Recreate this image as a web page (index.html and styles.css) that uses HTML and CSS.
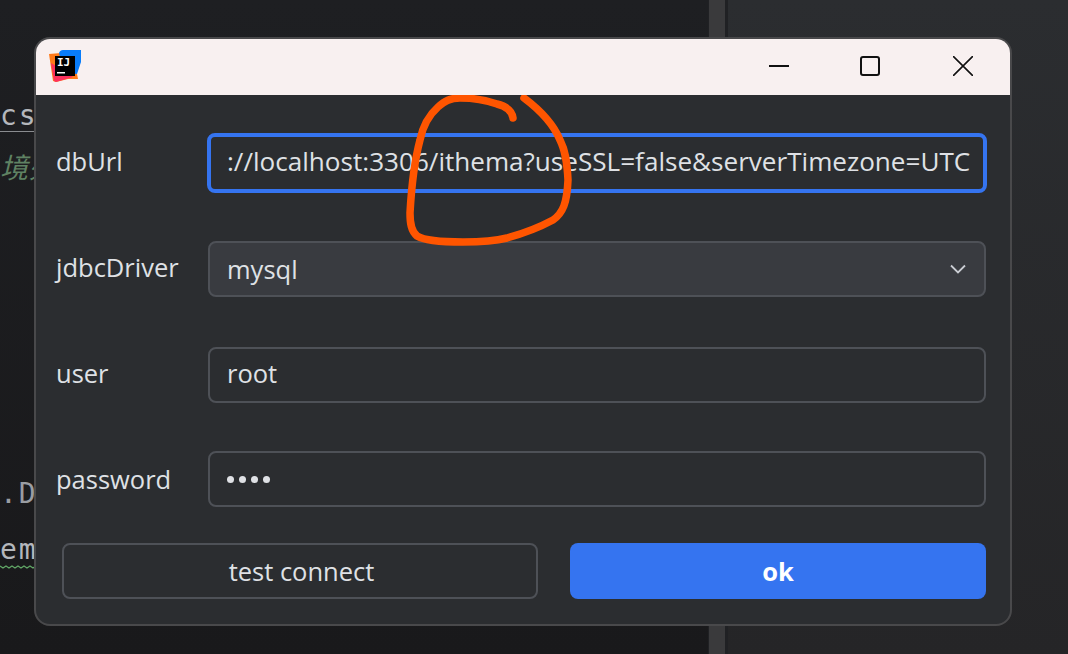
FILE: index.html
```html
<!DOCTYPE html>
<html lang="en">
<head>
  <meta charset="UTF-8" />
  <meta name="viewport" content="width=device-width, initial-scale=1.0" />
  <title>Database settings</title>
  <link rel="stylesheet" href="styles.css">
</head>
<body>
  <div class="ide">
    <div class="editor">
      <div class="code code-link">cs</div>
      <div class="code code-note">境列</div>
      <div class="code code-dot">.D</div>
      <div class="code code-warn">em</div>
      <svg class="squiggle" width="36" height="4" viewBox="0 0 36 4"><path d="M0 1L3 3L6 1L9 3L12 1L15 3L18 1L21 3L24 1L27 3L30 1L33 3L36 1" fill="none" stroke="#62a867" stroke-width="1.3"/></svg>
    </div>
    <div class="scrollbar"><div class="thumb"></div></div>
    <div class="side"></div>
  </div>

  <div class="dialog">
    <div class="titlebar">
      <svg class="app-logo" width="34" height="34" viewBox="0 0 34 34">
        <path d="M1 5 L13 4 L28 20 L30 30 L20 30 L8 33 L5 32 Z" fill="#ff7a1a"/>
        <path d="M11 4 Q12 1 15 1 L33 1 L33 13 L29 25 L16 24 Z" fill="#087cfa"/>
        <path d="M3 14 L16 22 L25 28 L8 33 L6 32 Z" fill="#fe315d"/>
        <rect x="7" y="7" width="20" height="20" fill="#000"/>
        <rect x="9" y="23" width="8" height="1.5" fill="#fff"/>
        <text class="logo-text" x="9" y="17">IJ</text>
      </svg>
      <div class="win-buttons">
        <svg class="win-btn win-min" width="20" height="20" viewBox="0 0 20 20"><path d="M0 10H20" stroke="#111" stroke-width="2"/></svg>
        <svg class="win-btn" width="20" height="20" viewBox="0 0 20 20"><rect x="1" y="1" width="18" height="18" rx="2" fill="none" stroke="#111" stroke-width="2"/></svg>
        <svg class="win-btn" width="20" height="20" viewBox="0 0 20 20"><path d="M0 0L20 20M20 0L0 20" stroke="#111" stroke-width="1.6"/></svg>
      </div>
    </div>
    <div class="form">
      <div class="row row-url">
        <label class="label-up">dbUrl</label>
        <div class="field focused text-up"><span class="url">://localhost:3306/ithema?useSSL=false&amp;serverTimezone=UTC</span></div>
      </div>
      <div class="row">
        <label class="label-up">jdbcDriver</label>
        <div class="field select">
          <span>mysql</span>
          <svg width="16" height="10" viewBox="0 0 16 10"><path d="M1 1.5L8 8.5L15 1.5" fill="none" stroke="#c9ccd2" stroke-width="1.8"/></svg>
        </div>
      </div>
      <div class="row row-user">
        <label class="label-up">user</label>
        <div class="field text-up"><span>root</span></div>
      </div>
      <div class="row">
        <label>password</label>
        <div class="field"><div class="dots"><i></i><i></i><i></i><i></i></div></div>
      </div>
      <div class="actions">
        <button class="btn">test connect</button>
        <button class="btn primary">ok</button>
      </div>
    </div>
    <svg class="scribble" width="200" height="160" viewBox="0 0 200 160">
      <path d="M138 23 C137 15 130 11 122 9 C108 4 98 3 85 3 C75 3 70 6 63 12 C54 20 48 30 45 45 C41 60 37 82 35 118 C35 128 36 136 42 141 C50 146 70 147 88 147 C105 147 120 146 132 143 C150 138 165 132 178 125 C188 118 192 108 193 85 C192 65 190 55 185 45 C178 28 165 15 149 3" fill="none" stroke="#ff5500" stroke-width="7.5" stroke-linecap="round" stroke-linejoin="round"/>
    </svg>
  </div>
</body>
</html>
```

FILE: styles.css
```css
html, body { margin: 0; height: 100%; }
body { width: 1068px; height: 654px; overflow: hidden; background: #1e1f22; font-family: "Open Sans", "Noto Sans", sans-serif; }

.ide { display: flex; height: 654px; }
.editor { width: 708px; background: linear-gradient(#1e1f22, #19191b); padding-top: 99px; box-sizing: border-box; }
.scrollbar { width: 20px; background: #202124; display: flex; justify-content: center; }
.thumb { width: 16px; margin-right: 3px; background: #3a3a3c; }
.side { flex: 1; background: linear-gradient(#2b2d30, #252527); }

.code { font-family: "DejaVu Sans Mono", monospace; font-size: 28px; letter-spacing: 2px; color: #b4b7bc; height: 32px; line-height: 34px; white-space: nowrap; }
.code-link { border-bottom: 1px solid #8a8c90; width: 35px; }
.code-note { font-family: "Noto Sans CJK SC", sans-serif; font-style: italic; letter-spacing: 0; color: #5f8263; margin-top: 17px; }
.code-dot { margin-top: 296px; color: #9a9da3; }
.code-warn { margin-top: 24px; }
.squiggle { display: block; }

.dialog { position: absolute; left: 34px; top: 37px; width: 978px; height: 589px; box-sizing: border-box; border: 2px solid #49494b; border-radius: 16px; background: #2b2d30; overflow: hidden; }
.titlebar { height: 56px; background: #f8f0f0; display: flex; align-items: center; justify-content: space-between; }
.app-logo { margin-left: 12px; margin-bottom: 2px; }
.logo-text { font-family: "DejaVu Sans Mono", monospace; font-size: 11px; font-weight: bold; fill: #fff; }
.win-buttons { display: flex; gap: 73px; margin-right: 37px; margin-bottom: 2px; }
.win-min { margin-right: -2px; }

.form { padding: 38px 24px 0 20px; }
.row { display: flex; align-items: center; height: 56px; margin-bottom: 50px; }
.row-url { height: 59px; margin-bottom: 49px; }
.row-user { margin-bottom: 48px; }
.row label { width: 152px; font-size: 25.5px; color: #dfe1e5; }
.row .label-up { margin-bottom: 4px; }
.field { flex: 1; height: 56px; box-sizing: border-box; border: 2px solid #4e5157; border-radius: 8px; padding: 0 17px; display: flex; align-items: center; font-size: 25.5px; color: #dfe1e5; overflow: hidden; white-space: nowrap; }
.text-up { padding-bottom: 4px; }
.focused { border: 4px solid #3574f0; height: 60px; margin: 0 -1px; padding: 0 16px 3px; }
.url { font-size: 26.1px; }
.select { background: #393b40; justify-content: space-between; padding-right: 18px; }
.dots { display: flex; gap: 5px; }
.dots i { width: 7px; height: 7px; border-radius: 50%; background: #dfe1e5; }

.actions { display: flex; gap: 32px; margin: -14px 0 0 6px; }
.btn { height: 56px; width: 476px; box-sizing: border-box; border: 2px solid #4e5157; border-radius: 8px; background: transparent; color: #dfe1e5; font-family: inherit; font-size: 25.5px; padding: 0 0 0 3px; }
.primary { width: 416px; border: none; background: #3574f0; color: #fff; font-weight: 700; padding: 0; }

.scribble { position: absolute; left: 339px; top: 56px; }
```
